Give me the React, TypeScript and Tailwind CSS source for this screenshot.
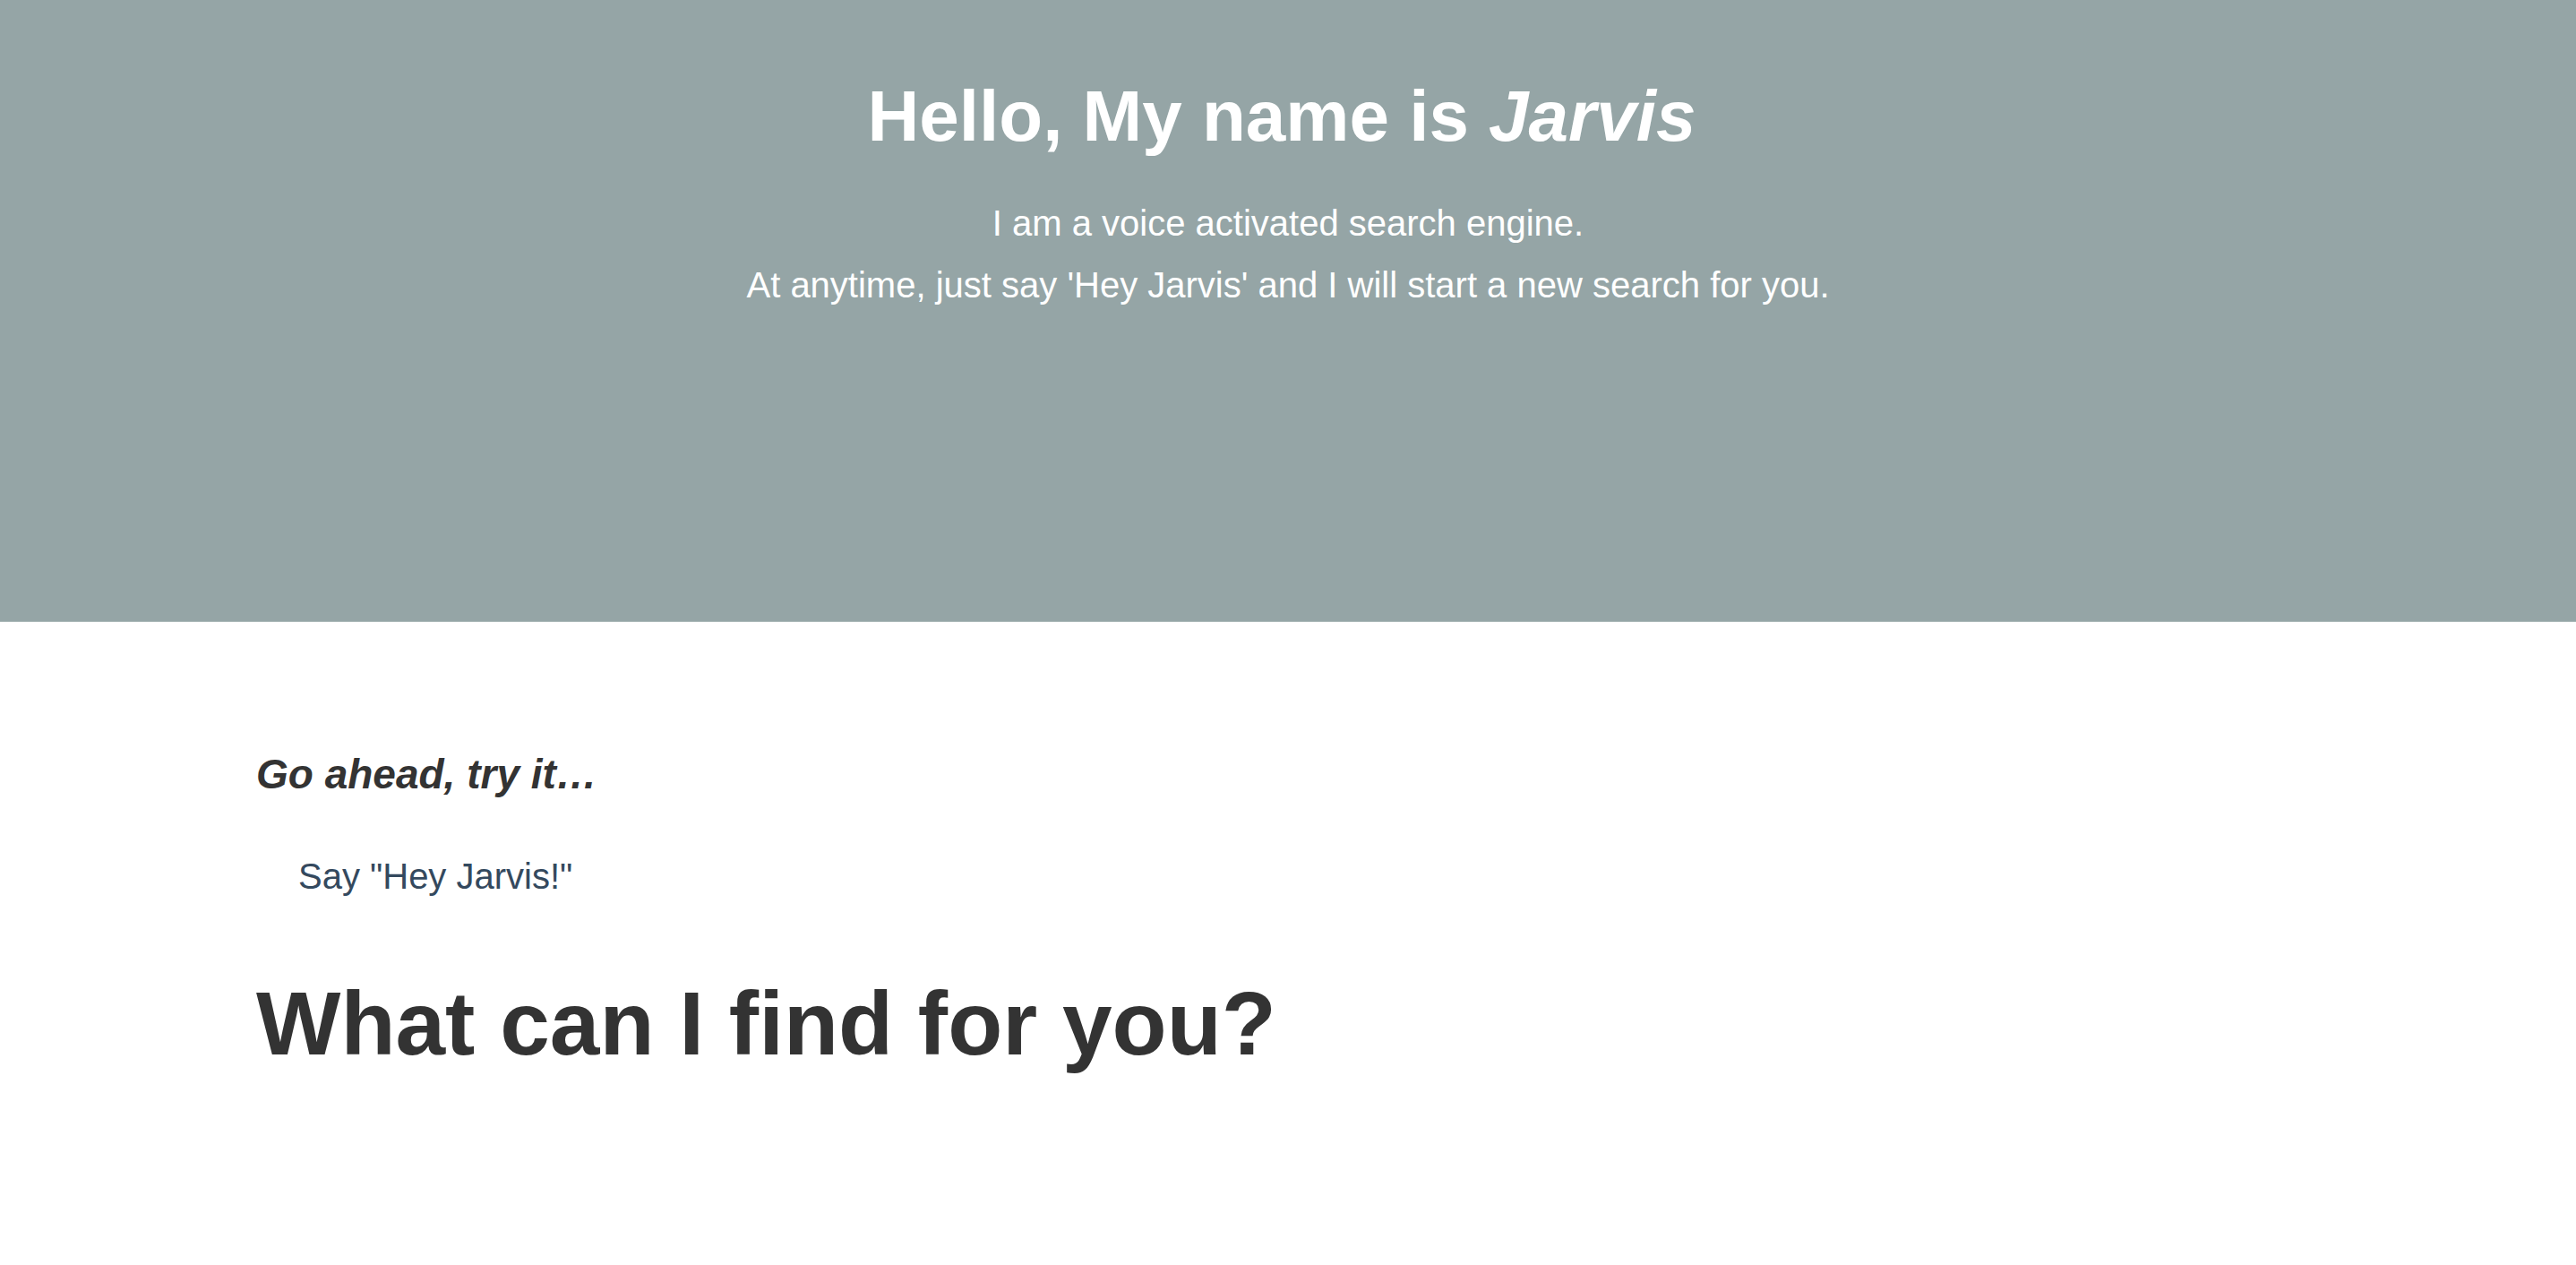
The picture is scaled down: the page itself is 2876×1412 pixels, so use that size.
import React from "react";

export default function App() {
  return (
    <div className="min-h-screen bg-white" style={{ fontFamily: '"Liberation Sans", Arial, Helvetica, sans-serif' }}>
      <header className="h-[694px] bg-[#95a5a6] pt-[86px] text-center text-white">
        <h1 className="pr-[14px] text-[80px] font-bold leading-[88px]">
          Hello, My name is <em className="italic">Jarvis</em>
        </h1>
        <div className="mt-[41px]">
          <p className="text-[40px] leading-[69px]">I am a voice activated search engine.</p>
          <p className="text-[40px] leading-[69px]">At anytime, just say 'Hey Jarvis' and I will start a new search for you.</p>
        </div>
      </header>
      <main className="mx-auto w-[2304px] pt-[143px]">
        <h3 className="text-[46px] font-bold italic leading-[54px] text-[#333333]">Go ahead, try it…</h3>
        <p className="mt-[63px] pl-[47px] text-[40px] leading-[48px] text-[#34495e]">Say "Hey Jarvis!"</p>
        <h2 className="mt-[85px] text-[100px] font-bold leading-[110px] text-[#333333]">What can I find for you?</h2>
      </main>
    </div>
  );
}
